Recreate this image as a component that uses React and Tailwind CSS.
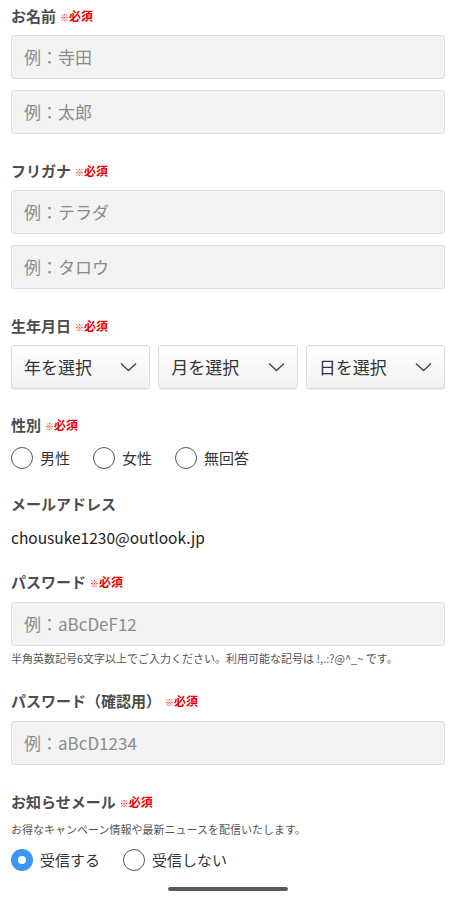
import React from 'react';

const font = { fontFamily: '"Noto Sans CJK JP", "Noto Sans", sans-serif' };

function Label({ text, required, className = '' }) {
  return (
    <div className={`flex items-center h-5 ${className}`}>
      <span className="text-[15px] font-bold text-[#4d4d4d] leading-5">{text}</span>
      {required && (
        <span className="ml-1 mt-[2px] text-[12px] font-bold text-[#ee0000] leading-5">
          <span className="text-[9px] font-normal">※</span>必須
        </span>
      )}
    </div>
  );
}

function TextInput({ placeholder, className = '' }) {
  return (
    <div
      className={`h-[44px] rounded-[3px] border border-[#dedede] bg-[#f3f3f3] flex items-center px-3 text-[17px] text-[#8b8b8b] ${className}`}
    >
      {placeholder}
    </div>
  );
}

function Select({ text }) {
  return (
    <div className="flex-1 h-[44px] rounded-[3px] border border-[#dcdcdc] bg-gradient-to-b from-white to-[#f1f1f1] shadow-[0_1px_1px_rgba(0,0,0,0.06)] flex items-center justify-between pl-3 pr-3">
      <span className="text-[17px] text-[#333]">{text}</span>
      <svg width="17" height="10" viewBox="0 0 17 10" fill="none" stroke="#444" strokeWidth="1.4">
        <path d="M1 1.5l7.5 7 7.5-7" />
      </svg>
    </div>
  );
}

function Radio({ label, checked }) {
  return (
    <label className="flex items-center gap-[7px] mr-[23px]">
      {checked ? (
        <span className="w-[22px] h-[22px] rounded-full bg-[#3c96f5] flex items-center justify-center">
          <span className="w-[8px] h-[8px] rounded-full bg-white" />
        </span>
      ) : (
        <span className="w-[22px] h-[22px] rounded-full border-[1.5px] border-[#555] bg-white" />
      )}
      <span className="text-[15px] text-[#333]">{label}</span>
    </label>
  );
}

export default function App() {
  return (
    <div className="w-[456px] h-[900px] bg-white px-[11px] pt-[6px] relative overflow-hidden" style={font}>
      <Label text="お名前" required />
      <TextInput placeholder="例：寺田" className="mt-[9px]" />
      <TextInput placeholder="例：太郎" className="mt-[11px]" />

      <Label text="フリガナ" required className="mt-[27px]" />
      <TextInput placeholder="例：テラダ" className="mt-[9px]" />
      <TextInput placeholder="例：タロウ" className="mt-[11px]" />

      <Label text="生年月日" required className="mt-[27px]" />
      <div className="flex gap-2 mt-[9px]">
        <Select text="年を選択" />
        <Select text="月を選択" />
        <Select text="日を選択" />
      </div>

      <Label text="性別" required className="mt-[26px]" />
      <div className="flex items-center h-[22px] mt-[12px]">
        <Radio label="男性" />
        <Radio label="女性" />
        <Radio label="無回答" />
      </div>

      <Label text="メールアドレス" className="mt-[25px]" />
      <div className="mt-[11px] h-6 leading-6 text-[15.5px] text-[#222]">chousuke1230@outlook.jp</div>

      <Label text="パスワード" required className="mt-[23px]" />
      <TextInput placeholder="例：aBcDeF12" className="mt-[10px]" />
      <p className="mt-[4px] text-[11px] leading-4 text-[#555]">
        半角英数記号6文字以上でご入力ください。利用可能な記号は !,.:?@^_~ です。
      </p>

      <Label text="パスワード（確認用）" required className="mt-[25px]" />
      <TextInput placeholder="例：aBcD1234" className="mt-[10px]" />

      <Label text="お知らせメール" required className="mt-[27px]" />
      <p className="mt-[9px] text-[11px] leading-4 text-[#555]">
        お得なキャンペーン情報や最新ニュースを配信いたします。
      </p>
      <div className="flex items-center h-[22px] mt-[12px]">
        <Radio label="受信する" checked />
        <Radio label="受信しない" />
      </div>

      <div className="mx-auto mt-[16px] w-[120px] h-[4px] rounded-full bg-[#5a5a5a]" />
    </div>
  );
}
